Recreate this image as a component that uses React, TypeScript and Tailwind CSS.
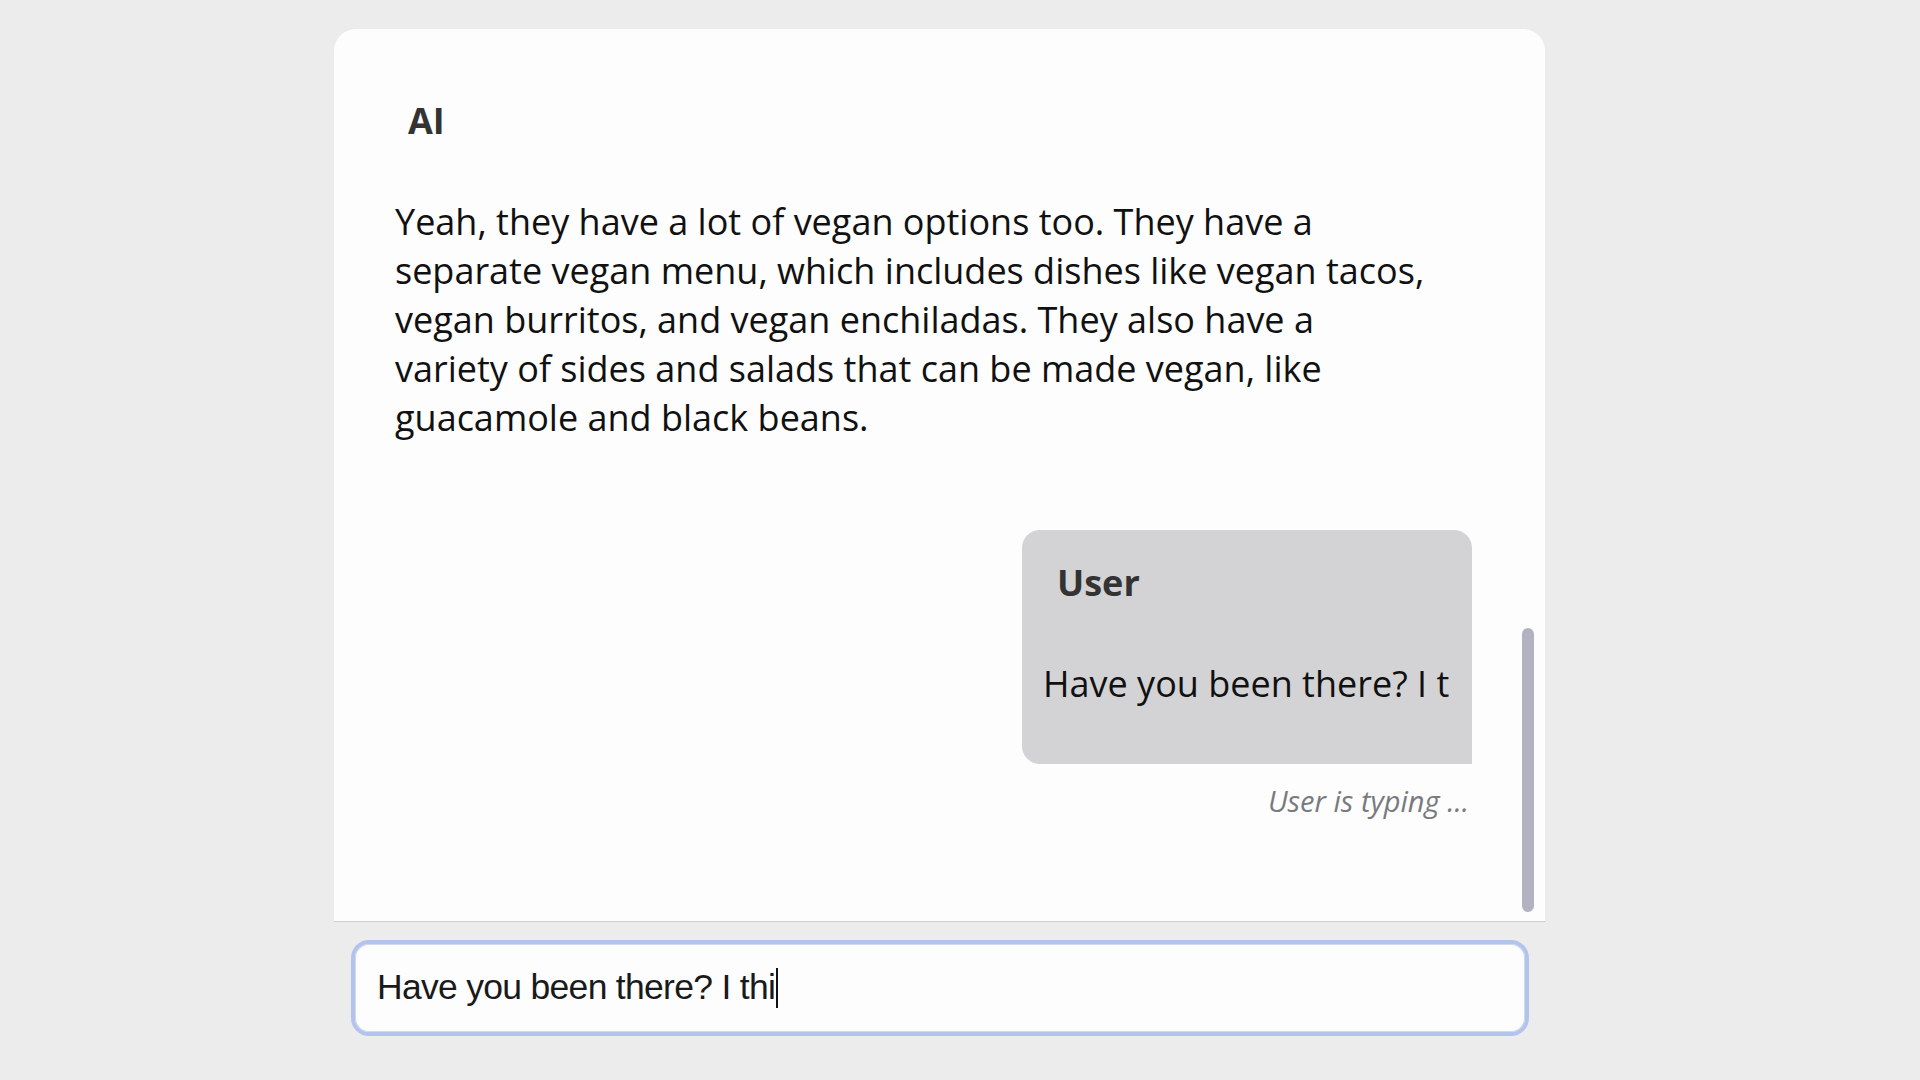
import React from 'react'

export default function App() {
  const aiText =
    'Yeah, they have a lot of vegan options too. They have a separate vegan menu, which includes dishes like vegan tacos, vegan burritos, and vegan enchiladas. They also have a variety of sides and salads that can be made vegan, like guacamole and black beans.'

  return (
    <div className="min-h-screen w-full bg-[#ececec] font-['Open_Sans',sans-serif]">
      <div className="ml-[334px] w-[1211px] pt-[29px]">
        <div className="h-[893px] flex bg-[#fdfdfe] rounded-t-[22px] border-b border-[#cdcdcd] overflow-hidden">
          <div className="flex-1 pl-[61px] pr-[38px] pt-[70px] flex flex-col">
            <div className="pl-[13px] text-[36px] leading-[43px] font-bold text-[#333333]">AI</div>
            <p className="mt-[55px] w-[1034px] text-[36px] leading-[49px] text-[#111111]">{aiText}</p>

            <div className="mt-[88px] self-end w-[450px] h-[234px] bg-[#d3d3d5] rounded-tl-[18px] rounded-tr-[18px] rounded-bl-[18px] pt-[31px] whitespace-nowrap overflow-hidden">
              <div className="pl-[35px] text-[36px] leading-[43px] font-bold text-[#333333]">User</div>
              <div className="mt-[55px] pl-[21px] text-[36px] leading-[49px] text-[#111111]">Have you been there? I t</div>
            </div>
            <div className="self-end mt-[19px] pr-[3px] text-[29px] leading-[36px] italic text-[#7a7a7e]">User is typing ...</div>
          </div>
          <div className="w-[35px] pl-[12px] pt-[599px]">
            <div className="w-[12px] h-[284px] rounded-full bg-[#b2b2c0]" />
          </div>
        </div>

        <div className="mt-[18px] ml-[17px] w-[1178px] h-[96px] rounded-[18px] border-[4px] border-[#b3c4ec] bg-[#fdfdfe] shadow-[inset_0_0_0_1px_#d0d8ee] flex items-center pl-[22px]">
          <span className="font-['Liberation_Sans',Arial,sans-serif] text-[35.5px] tracking-[-0.7px] text-[#1a1a1a]">Have you been there? I thi</span>
          <span className="ml-[1px] w-[2px] h-[40px] bg-[#111111]" />
        </div>
      </div>
    </div>
  )
}
